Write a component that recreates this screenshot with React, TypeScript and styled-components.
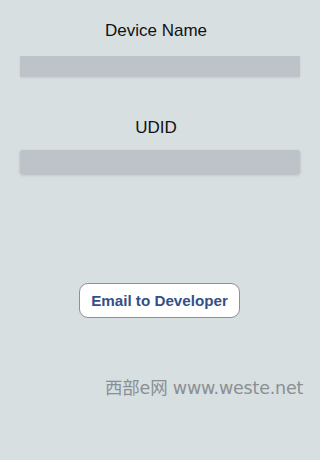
import React from 'react'
import styled, { createGlobalStyle } from 'styled-components'

const Global = createGlobalStyle`
  html, body {
    margin: 0;
    padding: 0;
    background: #d7dfe1;
  }
`

export default function App() {
  return (
    <Screen>
      <Global />
      <Label>Device Name</Label>
      <FlatField />
      <Label $top={41}>UDID</Label>
      <RoundField />
      <ButtonRow>
        <EmailButton>Email to Developer</EmailButton>
      </ButtonRow>
      <Watermark>西部e网 www.weste.net</Watermark>
    </Screen>
  )
}

const Screen = styled.div`
  width: 320px;
  height: 460px;
  background: #d7dfe1;
  display: flex;
  flex-direction: column;
  font-family: 'Liberation Sans', Arial, sans-serif;
  overflow: hidden;
`

const Label = styled.div<{ $top?: number }>`
  margin-top: ${p => p.$top ?? 21}px;
  height: 20px;
  line-height: 20px;
  text-align: center;
  font-size: 17px;
  color: #111;
  padding-right: 8px;
`

const FlatField = styled.div`
  margin: 15px 20px 0;
  height: 21px;
  background: #bec3c9;
  box-shadow: 0 1px 2px rgba(0, 0, 0, 0.08);
`

const RoundField = styled.div`
  margin: 12px 20px 0 20px;
  height: 24px;
  background: #bec3c9;
  border-radius: 3px;
  box-shadow: 0 1px 3px rgba(0, 0, 0, 0.18);
`

const ButtonRow = styled.div`
  margin-top: 109px;
  display: flex;
  justify-content: center;
`

const EmailButton = styled.button`
  width: 161px;
  height: 35px;
  margin-left: -1px;
  background: #fff;
  border: 1px solid #8e9194;
  border-radius: 9px;
  color: #354f87;
  font-family: 'Liberation Sans', Arial, sans-serif;
  font-weight: 700;
  font-size: 15.2px;
  padding: 0;
`

const Watermark = styled.div`
  margin-top: 56px;
  margin-left: 105px;
  font-family: 'DejaVu Sans', 'Noto Sans CJK SC', sans-serif;
  font-size: 17.5px;
  color: #8a8f93;
  letter-spacing: -0.2px;
`
